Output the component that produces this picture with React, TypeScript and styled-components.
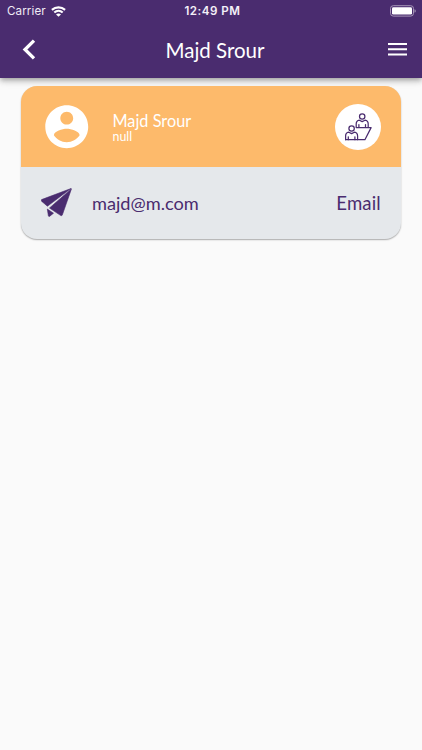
import React from "react";
import styled, { createGlobalStyle } from "styled-components";

const PURPLE = "#4a2c6f";

const GlobalStyle = createGlobalStyle`
  *, *::before, *::after { box-sizing: border-box; }
  body { margin: 0; background: #fafafa; font-family: Lato, sans-serif; }
  svg { display: block; flex: none; }
`;

const Screen = styled.div`
  width: 422px;
  height: 750px;
  overflow: hidden;
  background: #fafafa;
`;

const Header = styled.header`
  height: 77.5px;
  background: ${PURPLE};
  color: #fff;
  box-shadow: 0 2px 4px -1px rgba(0, 0, 0, 0.2), 0 4px 5px rgba(0, 0, 0, 0.14),
    0 1px 10px rgba(0, 0, 0, 0.12);
`;

const StatusBar = styled.div`
  display: grid;
  grid-template-columns: 1fr auto 1fr;
  align-items: center;
  height: 22px;
  padding: 0 6px 0 7px;
  font-family: Inter, sans-serif;
  font-size: 11.6px;
  line-height: 22px;
`;

const Carrier = styled.div`
  display: flex;
  align-items: center;
  gap: 5px;
  letter-spacing: 0.1px;
  color: #f0ebf5;
`;

const Clock = styled.div`
  padding-left: 2px;
  font-size: 11.6px;
  font-weight: 600;
  letter-spacing: 0.5px;
  color: #f4f0f8;
`;

const Battery = styled.div`
  display: flex;
  justify-content: flex-end;
`;

const NavBar = styled.div`
  display: grid;
  grid-template-columns: 56px 1fr 56px;
  align-items: center;
  height: 55px;
`;

const NavButton = styled.button<{ $side: "left" | "right" }>`
  display: flex;
  justify-content: ${(p) => (p.$side === "left" ? "flex-start" : "flex-end")};
  padding: ${(p) => (p.$side === "left" ? "0 0 0 22px" : "0 15px 0 0")};
  border: 0;
  background: none;
  color: #fff;
`;

const Title = styled.h1`
  margin: 0;
  padding-left: 8px;
  text-align: center;
  font-size: 20.5px;
  line-height: 26px;
  font-weight: 400;
`;

const Card = styled.section`
  margin: 8.5px 20.6px 0 20.5px;
  border-radius: 16px;
  overflow: hidden;
  background: #e5e8eb;
  box-shadow: 0 1px 1.5px rgba(0, 0, 0, 0.32);
`;

const Profile = styled.div`
  display: flex;
  align-items: center;
  height: 81px;
  padding: 0 20.5px;
  background: #fdba6b;
  color: #fff;
`;

const Identity = styled.div`
  flex: 1;
  padding: 2px 0 0 20px;
`;

const Name = styled.div`
  font-size: 16.3px;
  line-height: 19px;
`;

const Subtitle = styled.div`
  font-size: 12.4px;
  line-height: 14px;
`;

const Badge = styled.div`
  display: flex;
  align-items: center;
  justify-content: center;
  width: 46px;
  height: 46px;
  border-radius: 50%;
  background: #fff;
`;

const ContactRow = styled.div`
  display: flex;
  align-items: center;
  height: 71.5px;
  padding: 0 20.5px;
  color: ${PURPLE};
  font-size: 18.2px;
  line-height: 24px;
`;

const Address = styled.div`
  flex: 1;
  padding-left: 20px;
`;

const Label = styled.div`
  font-size: 18.6px;
  letter-spacing: 0.15px;
`;

const WifiIcon = () => (
  <svg width="15" height="11" viewBox="0 0 15 11" fill="none" stroke="#fff" strokeWidth="2.1">
    <path d="M.9 3.9c3.8-3.4 9.4-3.4 13.2 0" />
    <path d="M3.3 6.5c2.4-2.2 6-2.2 8.4 0" />
    <path d="M7.5 10.8 5 8.4c1.5-1.2 3.5-1.2 5 0z" fill="#fff" stroke="none" />
  </svg>
);

const BatteryIcon = () => (
  <svg width="26" height="12" viewBox="0 0 26 12">
    <rect x=".5" y=".7" width="23" height="10.4" rx="2.8" fill="none" stroke="#a695b7" />
    <rect x="2" y="2.2" width="20" height="7.4" rx="1.4" fill="#fff" />
    <path d="M24.5 4.2c1.7.5 1.7 2.9 0 3.4z" fill="#a695b7" />
  </svg>
);

const BackIcon = () => (
  <svg width="14" height="21" viewBox="0 0 14 21" fill="none" stroke="currentColor" strokeWidth="3.3">
    <path d="M12 1.6 3 10.5l9 8.9" />
  </svg>
);

const MenuIcon = () => (
  <svg width="19" height="13" viewBox="0 0 19 13" fill="currentColor">
    <path d="M0 0h19v2.1H0zM0 5.2h19v2.1H0zM0 10.4h19v2.1H0z" />
  </svg>
);

const AccountIcon = () => (
  <svg width="51.5" height="51.5" viewBox="0 0 24 24" fill="currentColor">
    <path d="M12 2C6.48 2 2 6.48 2 12s4.48 10 10 10 10-4.48 10-10S17.52 2 12 2zm0 3c1.66 0 3 1.34 3 3s-1.34 3-3 3-3-1.34-3-3 1.34-3 3-3zm0 14.2c-2.5 0-4.71-1.28-6-3.22.03-1.99 4-3.08 6-3.08 1.99 0 5.97 1.09 6 3.08-1.29 1.94-3.5 3.22-6 3.22z" />
  </svg>
);

const MeetingIcon = () => (
  <svg
    width="28"
    height="28"
    viewBox="0 0 28 28"
    fill="none"
    stroke="#4a2c6f"
    strokeWidth="1.25"
    strokeLinejoin="round"
    strokeLinecap="round"
  >
    <circle cx="18.2" cy="3.5" r="2.7" />
    <path d="M12.2 14v-3c0-2.2 1.2-3.5 3.2-3.8l2.8 1.4L21 7.200c2 .3 3.200 1.600 3.200 3.800v3M14.900 11.600v2.400M21.500 11.600v2.400" />
    <circle cx="7.6" cy="15.5" r="2.7" />
    <path d="M1.6 26.7V23c0-2.200 1.200-3.500 3.200-3.800l2.800 1.400 2.800-1.400c2 .3 3.200 1.600 3.200 3.800v3.700M4.300 23.800v2.900M10.900 23.800v2.900" />
    <path d="M12.200 14.600h14.900l-6.200 12.100H1.600" />
  </svg>
);

const PlaneIcon = () => (
  <svg width="31" height="29" viewBox="0 0 31 29" fill="currentColor" stroke="currentColor" strokeLinejoin="round" strokeWidth=".6">
    <path d="M30 .5.6 11.600c-.5.400-.4 1.200 0 1.600l5.800 5z" />
    <path d="M30.500.7 21.300 27c-.3.700-.9.900-1.500.6L8.500 20z" />
    <path d="M6.300 21l1.100 7c.3.600 1 .6 1.400.2l3.700-3z" />
  </svg>
);

export default function App() {
  return (
    <Screen>
      <GlobalStyle />
      <Header>
        <StatusBar>
          <Carrier>
            Carrier
            <WifiIcon />
          </Carrier>
          <Clock>12:49 PM</Clock>
          <Battery>
            <BatteryIcon />
          </Battery>
        </StatusBar>
        <NavBar>
          <NavButton $side="left" aria-label="Back">
            <BackIcon />
          </NavButton>
          <Title>Majd Srour</Title>
          <NavButton $side="right" aria-label="Menu">
            <MenuIcon />
          </NavButton>
        </NavBar>
      </Header>
      <Card>
        <Profile>
          <AccountIcon />
          <Identity>
            <Name>Majd Srour</Name>
            <Subtitle>null</Subtitle>
          </Identity>
          <Badge>
            <MeetingIcon />
          </Badge>
        </Profile>
        <ContactRow>
          <PlaneIcon />
          <Address>majd@m.com</Address>
          <Label>Email</Label>
        </ContactRow>
      </Card>
    </Screen>
  );
}
